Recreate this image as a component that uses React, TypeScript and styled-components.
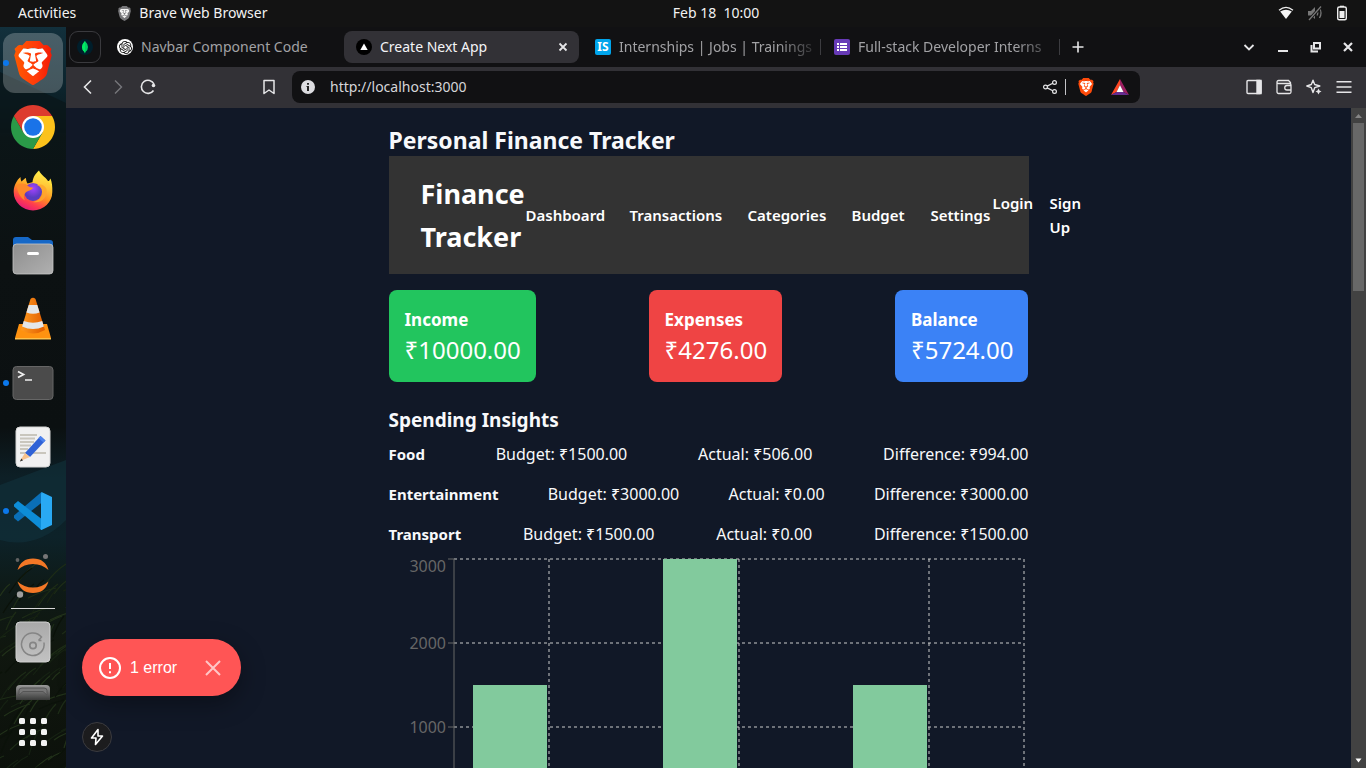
import React from "react";
import styled, { createGlobalStyle, css } from "styled-components";
import { SiBrave, SiOpenai } from "react-icons/si";

const uiFont = '"Noto Sans", "Open Sans", sans-serif';

const GlobalStyle = createGlobalStyle`
  *, *::before, *::after { box-sizing: border-box; }
  html, body, #root { height: 100%; margin: 0; }
  body { background: #121214; color: #f3f4f6; font: 14px/20px ${uiFont}; overflow: hidden; }
  h1, h2, h3, p, ul { margin: 0; padding: 0; }
  ul { list-style: none; }
  button { padding: 0; border: 0; background: none; color: inherit; font: inherit; cursor: pointer; }
  a { color: inherit; text-decoration: none; }
  svg { display: block; flex: none; }
`;

/* ---------- desktop shell ---------- */

const Desktop = styled.div`
  display: flex;
  flex-direction: column;
  height: 100vh;
`;

const TopBar = styled.header`
  display: grid;
  grid-template-columns: 1fr auto 1fr;
  align-items: center;
  flex: none;
  height: 27px;
  padding: 0 18px 1px;
  background: #131313;
  color: #f2f2f2;
`;

const TopGroup = styled.div<{ $end?: boolean; $gap: number }>`
  display: flex;
  align-items: center;
  justify-content: ${(p) => (p.$end ? "flex-end" : "flex-start")};
  gap: ${(p) => p.$gap}px;
`;

const AppMenu = styled.button`
  display: flex;
  align-items: center;
  gap: 7px;
`;

/* centred over the window area, to the right of the dock */
const Clock = styled.button`
  margin-left: 66px;
  white-space: pre;
`;

const Workspace = styled.div`
  display: flex;
  flex: 1;
  min-height: 0;
`;

/* ---------- dock ---------- */

const DockBar = styled.nav`
  position: relative;
  display: flex;
  flex-direction: column;
  flex: none;
  width: 66px;
  padding: 4px 0;
  overflow: hidden;
  background: linear-gradient(#12303c 0, #0c242d 60px, #0b1517 110px, #0c1112 240px, #0b1011 400px, #0d1f26 450px, #0d2229 510px, #0e1a17 560px, #10170f 620px, #0c110b 100%);
`;

const Wallpaper = styled.svg`
  position: absolute;
  inset: 0;
  width: 100%;
  height: 100%;
`;

const DockList = styled.div`
  position: relative;
  display: flex;
  flex-direction: column;
  flex: 1;
  min-height: 0;
  overflow: hidden;
`;

const DockItem = styled.button<{ $running?: boolean }>`
  position: relative;
  display: flex;
  align-items: center;
  justify-content: center;
  flex: none;
  width: 66px;
  height: 64px;
  ${(p) =>
    p.$running &&
    css`
      &::before {
        content: "";
        position: absolute;
        left: 3px;
        top: 29px;
        width: 6px;
        height: 6px;
        border-radius: 50%;
        background: #0b78ec;
      }
    `}
`;

const ActiveTile = styled.span`
  display: flex;
  align-items: center;
  justify-content: center;
  width: 60px;
  height: 60px;
  border-radius: 12px;
  background: rgba(255, 255, 255, 0.23);
`;

const DockDivider = styled.hr`
  flex: none;
  width: 44px;
  height: 1px;
  margin: 1px auto;
  border: 0;
  background: #d8d8d8;
`;

const LogoStack = styled.span`
  position: relative;
  display: block;
  & > svg + svg { position: absolute; inset: 0; }
`;

/* ---------- browser window ---------- */

const Window = styled.section`
  display: flex;
  flex-direction: column;
  flex: 1;
  min-width: 0;
`;

const TabStrip = styled.div`
  display: flex;
  align-items: center;
  flex: none;
  gap: 4px;
  height: 40px;
  padding: 0 3px;
  background: #111113;
`;

const PinnedTab = styled.button`
  display: flex;
  align-items: center;
  justify-content: center;
  flex: none;
  width: 32px;
  height: 32px;
  border: 1px solid #3a3a3e;
  border-radius: 9px;
`;

const Tab = styled.div<{ $active?: boolean; $divided?: boolean }>`
  position: relative;
  display: flex;
  align-items: center;
  flex: 0 1 235px;
  gap: 8px;
  min-width: 0;
  height: 32px;
  padding: 0 ${(p) => (p.$active ? 10 : 2)}px 0 12px;
  border-radius: 8px;
  background: ${(p) => (p.$active ? "#323136" : "transparent")};
  color: ${(p) => (p.$active ? "#f4f4f6" : "#a2a2a5")};
  ${(p) =>
    p.$divided &&
    css`
      &::after {
        content: "";
        position: absolute;
        right: -3px;
        top: 8px;
        width: 1px;
        height: 16px;
        background: #3c3c40;
      }
    `}
`;

const TabTitle = styled.button<{ $fade?: boolean }>`
  flex: 1;
  min-width: 0;
  overflow: hidden;
  text-align: left;
  white-space: nowrap;
  ${(p) => p.$fade && css`mask-image: linear-gradient(90deg, #000 80%, rgba(0, 0, 0, 0.15));`}
`;

const TabIcon = styled.span<{ $bg: string; $round?: boolean }>`
  display: flex;
  align-items: center;
  justify-content: center;
  flex: none;
  width: 16px;
  height: 16px;
  border-radius: ${(p) => (p.$round ? "50%" : "2px")};
  background: ${(p) => p.$bg};
  color: #fff;
  font: 700 12px/16px ${uiFont};
`;

const IconButton = styled.button<{ $w?: number }>`
  display: flex;
  align-items: center;
  justify-content: center;
  flex: none;
  width: ${(p) => p.$w ?? 30}px;
  height: 30px;
  color: #e6e6e8;
`;

const WindowControls = styled.div`
  display: flex;
  margin-left: auto;
`;

const Toolbar = styled.div`
  display: flex;
  align-items: center;
  flex: none;
  height: 41px;
  padding: 0 7px 1px;
  background: #323136;
`;

const Spacer = styled.div<{ $grow: number }>`
  flex: ${(p) => p.$grow} 1 0;
`;

const AddressBar = styled.form`
  display: flex;
  align-items: center;
  flex: 837 1 0;
  min-width: 0;
  height: 32px;
  margin-left: 8px;
  padding: 0 2px 0 9px;
  border-radius: 8px;
  background: #111113;
`;

const AddressInput = styled.input`
  flex: 1;
  min-width: 0;
  padding: 0 0 0 15px;
  border: 0;
  outline: 0;
  background: none;
  color: #d6d6d9;
  font: 14px/20px ${uiFont};
`;

const AddressRule = styled.span`
  width: 1px;
  height: 16px;
  margin-right: 4px;
  background: #c4c4c8;
`;

/* ---------- page ---------- */

const Viewport = styled.div`
  position: relative;
  display: flex;
  flex: 1;
  min-height: 0;
`;

const Page = styled.main`
  flex: 1;
  min-width: 0;
  overflow: hidden;
  background: #111827;
  color: #f8f9fb;
  font-size: 16px;
  line-height: 24px;
`;

const Container = styled.div`
  max-width: 640px;
  margin: 0 auto;
  padding-top: 16px;
`;

const PageTitle = styled.h1`
  font-size: 23px;
  font-weight: 700;
  line-height: 32px;
`;

const Navbar = styled.nav`
  display: flex;
  align-items: center;
  padding: 16px 32px;
  background: #333;
  color: #fff;
  font-size: 15px;
  font-weight: 600;
`;

const Brand = styled.a`
  flex: none;
  width: 105px;
  font-size: 27px;
  font-weight: 700;
  line-height: 43px;
`;

const NavLinks = styled.ul`
  display: grid;
  grid-template-columns: 80px 94px 80px 55px 62px;
  column-gap: 24px;
  flex: none;
`;

const AuthLinks = styled.div`
  display: grid;
  grid-template-columns: 41px 32px;
  column-gap: 16px;
  flex: none;
`;

const Cards = styled.section`
  display: flex;
  justify-content: space-between;
  margin-top: 16px;
`;

const Card = styled.article<{ $color: string }>`
  padding: 16px 15px 16px 16px;
  border-radius: 8px;
  background: ${(p) => p.$color};
  color: #fff;
`;

const CardTitle = styled.h2`
  font-size: 17px;
  font-weight: 700;
  line-height: 28px;
`;

const CardAmount = styled.p`
  font-size: 24px;
  line-height: 32px;
`;

const SectionTitle = styled.h2`
  margin-top: 24px;
  font-size: 19px;
  font-weight: 700;
  line-height: 28px;
`;

const InsightRow = styled.li`
  display: flex;
  justify-content: space-between;
  padding: 8px 0;
`;

const InsightName = styled.strong`
  font-size: 15px;
`;

const ChartText = styled.text`
  fill: #666;
  font: 16px ${uiFont};
  text-anchor: end;
`;

const ScrollTrack = styled.div`
  display: flex;
  flex-direction: column;
  align-items: center;
  flex: none;
  width: 15px;
  padding: 5px 0;
  background: #424242;
`;

const ScrollThumb = styled.div`
  width: 11px;
  height: 168px;
  margin: 4px 0 auto;
  background: #686868;
`;

const Toast = styled.div`
  position: absolute;
  left: 16px;
  bottom: 72px;
  display: flex;
  align-items: center;
  height: 57px;
  padding: 0 20px 0 16px;
  border-radius: 29px;
  background: #ff5555;
  color: #fff;
  box-shadow: 0 8px 24px rgba(0, 0, 0, 0.35);
  font: 16px/24px "Liberation Sans", Arial, sans-serif;
`;

const ToastLabel = styled.span`
  margin: 0 28px 0 8px;
`;

const DevButton = styled.button`
  position: absolute;
  left: 16px;
  bottom: 16px;
  display: flex;
  align-items: center;
  justify-content: center;
  width: 30px;
  height: 30px;
  border: 1px solid #3b3b3f;
  border-radius: 50%;
  background: #1c1c1e;
`;

/* ---------- drawings ---------- */

type StrokeProps = { size?: number; width?: number; box?: number; children: React.ReactNode };

const Line = ({ size = 16, width = 1.3, box = 16, children }: StrokeProps) => (
  <svg width={size} height={size} viewBox={`0 0 ${box} ${box}`} fill="none" stroke="currentColor" strokeWidth={width}>
    {children}
  </svg>
);

const BraveLogo = ({ size, fill, face = "#fff" }: { size: number; fill: string; face?: string }) => (
  <LogoStack>
    <svg width={size} height={size} viewBox="0 0 24 24">
      <path d="M6 4h12l2.500 3-1.500 9-7 6-7-6L3.500 7z" fill={face} />
    </svg>
    <SiBrave size={size} fill={fill} />
  </LogoStack>
);

const Gradients = () => (
  <svg width="0" height="0" style={{ position: "absolute" }} aria-hidden="true">
    <defs>
      <linearGradient id="brave"><stop stopColor="#ff5a00" /><stop offset=".6" stopColor="#ff3a0a" /><stop offset="1" stopColor="#f21a05" /></linearGradient>
    </defs>
  </svg>
);

const ChromeLogo = () => (
  <svg width="44" height="44" viewBox="0 0 44 44">
    <path d="M22 22 2.950 11A22 22 0 0 1 41.050 11z" fill="#dd3b2e" />
    <path d="M22 22V11h19.050A22 22 0 0 1 22 44l9.500-16.500z" fill="#fcc21b" />
    <path d="M22 22 31.500 27.500 22 44A22 22 0 0 1 2.950 11l9.550 16.500z" fill="#2a9a48" />
    <path d="M2.950 11 12.500 27.500 22 22 22 11z" fill="#dd3b2e" />
    <circle cx="22" cy="22" r="11" fill="#fff" />
    <circle cx="22" cy="22" r="8.800" fill="#1a73e8" />
  </svg>
);

const FirefoxLogo = () => (
  <svg width="42" height="42" viewBox="0 0 42 42">
    <defs>
      <linearGradient id="ffBody" x1=".8" y1=".1" x2=".3" y2="1"><stop stopColor="#ffe13c" /><stop offset=".45" stopColor="#ff9320" /><stop offset=".75" stopColor="#ff3d4e" /><stop offset="1" stopColor="#e3177e" /></linearGradient>
      <linearGradient id="ffFlame" x1=".6" y1="0" x2=".5" y2="1"><stop stopColor="#fff04a" /><stop offset=".6" stopColor="#ffbd34" /><stop offset="1" stopColor="#ff7a2a" /></linearGradient>
      <radialGradient id="ffGlobe" cx=".5" cy=".3"><stop stopColor="#a444ff" /><stop offset="1" stopColor="#5a3cc0" /></radialGradient>
    </defs>
    <path d="M1.700 21C2 15 5 10 8.500 7c0 2 .5 3.500 1 4.500C11 10 12.500 8.500 14 8c0 2 .5 4 1.500 5.500L21 12l16-1 1.500-2.500C40 12 40.500 17 40.300 22A19.300 18.500 0 0 1 1.700 22z" fill="url(#ffBody)" />
    <path d="M20.500 12C21 7 24 3 27 .5c2 5 8 7 10.500 13 2 7-1 14-6.500 18 2-6 0-12-5-15-2-1-4.500-2-5.500-4.500z" fill="url(#ffFlame)" />
    <circle cx="21" cy="22" r="9" fill="url(#ffGlobe)" />
    <path d="M5 15c4-2 8-2 11 1 1.500 1.500 3 1.500 5 1.500-.5 2.500-4 3-6 4-3 2-4 5-2 9-5-3-8-9-8-15.500z" fill="#ff8a2a" />
    <path d="M25 15.500c4 .5 6 4 5.500 8S26 31 21 32c9 1.500 15-5 13.500-13-2-4-6-5.500-9.500-3.500z" fill="#ffa62b" opacity=".85" />
  </svg>
);

const FilesLogo = () => (
  <svg width="42" height="40" viewBox="0 0 42 40">
    <defs>
      <linearGradient id="drawer" x2="1" y2="1"><stop stopColor="#8e8e8e" /><stop offset="1" stopColor="#b0b0b0" /></linearGradient>
    </defs>
    <path d="M1 14V5a3 3 0 0 1 3-3h12l4 3h18a3 3 0 0 1 3 3v8z" fill="#1668c7" />
    <rect x="1" y="9" width="40" height="30" rx="3.500" fill="url(#drawer)" stroke="#c6c6c6" strokeWidth=".8" />
    <rect x="15" y="17" width="12" height="3" rx="1.500" fill="#fff" />
  </svg>
);

const VlcLogo = () => (
  <svg width="40" height="44" viewBox="0 0 40 44">
    <defs>
      <linearGradient id="cone"><stop stopColor="#ff9a1f" /><stop offset="1" stopColor="#e05c00" /></linearGradient>
    </defs>
    <path d="M6 27h28l4 14H2z" fill="#ff9210" />
    <path d="M2 41h36v1.500H2z" fill="#ffc14a" />
    <path d="M8 33 17.500 2q2.500-2.500 5 0L32 33q-12 7-24 0z" fill="url(#cone)" />
    <path d="m15.700 8h8.600l2.300 7.500q-6.600 2.500-13.200 0zM10.800 24q9.200 3.500 18.400 0l1.700 5.500q-10.900 5-21.800 0z" fill="#e4e6e8" />
  </svg>
);

const TerminalLogo = () => (
  <svg width="42" height="36" viewBox="0 0 42 36">
    <rect x="1" y="1.500" width="40" height="33" rx="3.500" fill="#4b4b4b" stroke="#666" />
    <path d="m6 6.500 5.500 3-5.500 3" fill="none" stroke="#eee" strokeWidth="1.800" />
    <path d="M13 15h7" stroke="#eee" strokeWidth="1.500" />
  </svg>
);

const EditorLogo = () => (
  <svg width="36" height="42" viewBox="0 0 36 42">
    <rect x="1" y="1" width="34" height="40" rx="4" fill="#f1f1f1" stroke="#d5d5d5" />
    <path d="M5 9h17M5 12.500h15M5 16h14M5 19.500h11M5 23h8M5 27h26" stroke="#c9c6bd" strokeWidth="1.800" />
    <path d="m10 27 15.500-17 5 4.500L15 31z" fill="#2f62d6" />
    <path d="m25.500 10 5 4.500-2 2-5-4.500z" fill="#4d83ee" />
    <path d="M10 27 5 35l10-4z" fill="#f7c28c" />
    <path d="m6.500 32.500-1.700 3 3.200-1z" fill="#333" />
  </svg>
);

const CodeLogo = () => (
  <svg width="40" height="40" viewBox="0 0 40 40">
    <path d="M1 24.500 28.500 1l1 10L5 30.500l-4-3.500z" fill="#0a6fb7" />
    <path d="M1 13.500 5 10l25 19-1.500 10L1 15.500z" fill="#0d8dd8" />
    <path d="M28.500 1 39 6v28l-10.500 5q-1.500 0-.5-3V4q0-1.500.5-3z" fill="#29a9f3" />
  </svg>
);

const JupyterLogo = () => (
  <svg width="40" height="46" viewBox="0 0 40 46">
    <path d="M4.500 18Q8 6.500 20 6.500T35.500 18Q29 12 20 12T4.500 18zM4.500 29.500Q8 41 20 41t15.500-11.500Q29 35.500 20 35.500T4.500 29.500z" fill="#f37726" />
    <circle cx="32.500" cy="4.500" r="2.500" fill="#767677" />
    <circle cx="4.500" cy="8" r="1.900" fill="#616262" />
    <circle cx="7" cy="42.500" r="3.200" fill="#9e9e9e" />
  </svg>
);

const DiskLogo = () => (
  <svg width="36" height="42" viewBox="0 0 36 42">
    <defs>
      <linearGradient id="disk" x2="0" y2="1"><stop stopColor="#a9a9a9" /><stop offset="1" stopColor="#c2c2c2" /></linearGradient>
    </defs>
    <rect x="1" y="1" width="34" height="40" rx="4" fill="url(#disk)" stroke="#d0d0d0" />
    <path d="M23.500 19.500 26.500 16A11.300 11.300 0 1 0 29 21.500M26.500 16l-1-1M23.500 19.500h3" fill="none" stroke="#858585" strokeWidth="1.500" />
    <circle cx="18" cy="24.500" r="3.200" fill="none" stroke="#858585" strokeWidth="1.700" />
  </svg>
);

const UsbLogo = () => (
  <svg width="36" height="42" viewBox="0 0 36 42">
    <defs>
      <linearGradient id="usb" x2="0" y2="1"><stop stopColor="#9a9a9a" /><stop offset=".35" stopColor="#3c3d3c" /></linearGradient>
    </defs>
    <rect x="1" y="0" width="34" height="42" rx="4" fill="url(#usb)" />
    <path d="M4 10V5.500Q4 3 7 3h22q3 0 3 2.500V10l-4-3.500H8z" fill="#777" stroke="#555" />
  </svg>
);

const AppsLogo = () => (
  <svg width="28" height="28" viewBox="0 0 28 28" fill="#f2f2f2">
    {[0, 11, 22].map((y) => [0, 11, 22].map((x) => <rect key={`${x}-${y}`} x={x} y={y} width="6" height="6" rx="1.500" />))}
  </svg>
);

const blades = Array.from({ length: 90 }, (_, i) => {
  const x = ((i * 37) % 82) - 12;
  const y = 555 + ((i * 53) % 200);
  const dx = 8 + ((i * 29) % 22);
  const dy = 6 + ((i * 17) % 20);
  return { d: `M${x} ${y}q${dx / 2} ${-dy * 0.7} ${dx} ${-dy}`, color: ["#1d2c17", "#162213", "#22321a", "#0b120a"][i % 4] };
});

const GrassWallpaper = () => (
  <Wallpaper aria-hidden="true">
    <path d="M0 45 66 76v30H0z" fill="#0a1518" opacity=".7" />
    <path d="M0 458 66 433v60q-30 30-66 20z" fill="#12333e" opacity=".55" />
    {blades.map((b, i) => (
      <path key={i} d={b.d} stroke={b.color} strokeWidth="1.200" fill="none" />
    ))}
  </Wallpaper>
);

/* ---------- sections ---------- */

const dockApps = [
  { name: "Google Chrome", icon: <ChromeLogo /> },
  { name: "Firefox", icon: <FirefoxLogo /> },
  { name: "Files", icon: <FilesLogo /> },
  { name: "VLC media player", icon: <VlcLogo /> },
  { name: "Terminal", icon: <TerminalLogo />, running: true },
  { name: "Text Editor", icon: <EditorLogo /> },
  { name: "Visual Studio Code", icon: <CodeLogo />, running: true },
  { name: "Jupyter", icon: <JupyterLogo /> },
];

const Dock = () => (
  <DockBar aria-label="Dock">
    <GrassWallpaper />
    <DockList>
      <DockItem $running aria-label="Brave">
        <ActiveTile><BraveLogo size={44} fill="url(#brave)" /></ActiveTile>
      </DockItem>
      {dockApps.map((app) => (
        <DockItem key={app.name} $running={app.running} aria-label={app.name}>{app.icon}</DockItem>
      ))}
      <DockDivider />
      <DockItem aria-label="Disk"><DiskLogo /></DockItem>
      <DockItem aria-label="Removable drive"><UsbLogo /></DockItem>
    </DockList>
    <DockItem aria-label="Show applications"><AppsLogo /></DockItem>
  </DockBar>
);

const SystemBar = () => (
  <TopBar>
    <TopGroup $gap={41}>
      <button>Activities</button>
      <AppMenu><BraveLogo size={15} fill="#77777a" face="#f5f5f5" />Brave Web Browser</AppMenu>
    </TopGroup>
    <Clock>{"Feb 18  10:00"}</Clock>
    <TopGroup $gap={13} $end>
      <svg width="16" height="14" viewBox="0 0 16 14">
        <path d="M1 4.200Q8-1.500 15 4.200" fill="none" stroke="#eee" strokeWidth="1.300" />
        <path d="M2.200 5.600Q8 1.800 13.800 5.600L8 13z" fill="#f5f5f5" />
      </svg>
      <svg width="16" height="16" viewBox="0 0 16 16" fill="none" stroke="#777" strokeWidth="1.300">
        <path d="M1 6h3l4-4v12L4 10.500H1z" fill="#777" stroke="none" />
        <path d="M10 5.500q1.500 2.500 0 5M12.500 3q3 5 0 10" />
        <path d="M2 15 14 1.500" stroke="#131313" strokeWidth="3" />
        <path d="M2 15 14 1.500" />
      </svg>
      <svg width="12" height="16" viewBox="0 0 12 16">
        <path d="M4 2V.7h4V2" fill="#eee" />
        <rect x="1.700" y="2" width="8.600" height="12.700" rx="1.500" fill="none" stroke="#eee" strokeWidth="1.400" />
        <path d="M3.500 6h5v7h-5z" fill="#eee" />
      </svg>
    </TopGroup>
  </TopBar>
);

const Tabs = () => (
  <TabStrip>
    <PinnedTab aria-label="MongoDB">
      <svg width="16" height="16" viewBox="0 0 16 16">
        <circle cx="8" cy="8" r="8" fill="#001e2b" />
        <path d="M8 2q3 3 3 6t-2.500 5L8 14.500 7.500 13Q5 11 5 8t3-6z" fill="#00d163" />
        <path d="M8 2v12.500L7.500 13Q5 11 5 8t3-6z" fill="#00ed64" />
      </svg>
    </PinnedTab>
    <Tab>
      <TabIcon $bg="#fff" $round><SiOpenai size={13} color="#111" /></TabIcon>
      <TabTitle>Navbar Component Code</TabTitle>
    </Tab>
    <Tab $active>
      <TabIcon $bg="#000" $round>
        <svg width="8" height="8" viewBox="0 0 8 8"><path d="M4 .5 7.700 7H.3z" fill="#fff" /></svg>
      </TabIcon>
      <TabTitle>Create Next App</TabTitle>
      <IconButton $w={12} aria-label="Close tab"><Line size={12} width={1.8} box={12}><path d="m2.500 2.500 7 7m0-7-7 7" /></Line></IconButton>
    </Tab>
    <Tab $divided>
      <TabIcon $bg="#00a5ec">IS</TabIcon>
      <TabTitle $fade>Internships | Jobs | Trainings</TabTitle>
    </Tab>
    <Tab $divided>
      <TabIcon $bg="#673ab7">
        <svg width="10" height="8" viewBox="0 0 10 8" fill="#fff"><path d="M0 0h2v2H0zM3 0h7v2H3zM0 3h2v2H0zM3 3h7v2H3zM0 6h2v2H0zM3 6h7v2H3z" /></svg>
      </TabIcon>
      <TabTitle $fade>Full-stack Developer Interns</TabTitle>
    </Tab>
    <IconButton aria-label="New tab" $w={34}><Line size={12} width={1.6} box={12}><path d="M6 .5v11M.5 6h11" /></Line></IconButton>
    <WindowControls>
      <IconButton $w={34} aria-label="Search tabs"><Line width={1.8}><path d="m3.500 6 4.500 4.500L12.500 6" /></Line></IconButton>
      <IconButton $w={33} aria-label="Minimize"><Line width={2}><path d="M3 12h10" /></Line></IconButton>
      <IconButton $w={33} aria-label="Restore"><Line width={2}><path d="M6 4h6v5.500H6zM3.500 6v6.500H10" /></Line></IconButton>
      <IconButton $w={31} aria-label="Close"><Line width={2.2}><path d="m4 4 8 8m0-8-8 8" /></Line></IconButton>
    </WindowControls>
  </TabStrip>
);

const BrowserBar = () => (
  <Toolbar>
    <IconButton aria-label="Back"><Line width={1.6}><path d="M11 1.500 4.500 8l6.500 6.500" /></Line></IconButton>
    <IconButton aria-label="Forward"><Line width={1.4}><path d="M5 1.500 11.500 8 5 14.500" stroke="#77777c" /></Line></IconButton>
    <IconButton aria-label="Reload">
      <Line width={1.6}>
        <path d="M13.500 11.500A6.600 6.600 0 1 1 14 5" />
        <circle cx="13.500" cy="6.500" r="1.800" fill="currentColor" stroke="none" />
      </Line>
    </IconButton>
    <Spacer $grow={91} />
    <IconButton aria-label="Bookmark"><Line width={1.5}><path d="M3 1.500h10v13L8 11l-5 3.500z" strokeLinejoin="round" /></Line></IconButton>
    <AddressBar>
      <svg width="14" height="14" viewBox="0 0 14 14">
        <circle cx="7" cy="7" r="7" fill="#dcdce0" />
        <path d="M6 3h2v1.800H6zM5.500 6H8v5H6V7h-.5z" fill="#222" />
      </svg>
      <AddressInput aria-label="Address" defaultValue="http://localhost:3000" />
      <IconButton type="button" aria-label="Share">
        <Line width={1.2}>
          <circle cx="3.500" cy="8" r="1.900" /><circle cx="12.500" cy="3.500" r="1.900" /><circle cx="12.500" cy="12.500" r="1.900" />
          <path d="m5.200 7.100 5.600-2.800m-5.600 4.600 5.600 2.800" />
        </Line>
      </IconButton>
      <AddressRule />
      <IconButton type="button" $w={32} aria-label="Shields"><BraveLogo size={18} fill="#ff4b0a" /></IconButton>
      <IconButton type="button" $w={36} aria-label="Rewards">
        <svg width="18" height="16" viewBox="0 0 18 16">
          <path d="M9 0 0 16l5.500-3L9 6z" fill="#ff4724" />
          <path d="M9 0v6l3.500 7L18 16z" fill="#9e1f63" />
          <path d="m0 16 5.500-3h7l5.500 3z" fill="#662d91" />
          <path d="m9 6 3.500 7h-7z" fill="#fff" />
        </svg>
      </IconButton>
    </AddressBar>
    <Spacer $grow={99} />
    <IconButton aria-label="Sidebar"><Line width={1.4}><rect x="1" y="1.500" width="14" height="13" rx="1" /><path d="M11 1.500h4v13h-4z" fill="currentColor" /></Line></IconButton>
    <IconButton aria-label="Wallet"><Line width={1.3}><path d="M14.500 5V3.500L12.500 1.500h-10a1.500 1.500 0 0 0 0 3h11a1.500 1.500 0 0 1 1.500 1.500v7a1.500 1.500 0 0 1-1.500 1.500h-11A1.500 1.500 0 0 1 1 13V3M15 6.500h-4a2 2 0 0 0 0 4.500h4" /></Line></IconButton>
    <IconButton aria-label="Assistant">
      <Line width={1.4}>
        <path d="M7 1.200 8.700 5.500 13.800 7 8.700 8.700 7 13.500 5.300 8.700.8 7 5.300 5.500z" strokeLinejoin="round" />
        <path d="M12.500 9.500l1 2 2 1-2 1-1 2-1-2-2-1 2-1z" fill="currentColor" stroke="none" />
      </Line>
    </IconButton>
    <IconButton aria-label="Menu"><Line width={1.5}><path d="M.5 2.700h15M.5 8h15M.5 13.300h15" /></Line></IconButton>
  </Toolbar>
);

const summary = [
  { title: "Income", amount: "₹10000.00", color: "#22c55e" },
  { title: "Expenses", amount: "₹4276.00", color: "#ef4444" },
  { title: "Balance", amount: "₹5724.00", color: "#3b82f6" },
];

const insights = [
  { name: "Food", budget: 1500, actual: 506 },
  { name: "Entertainment", budget: 3000, actual: 0 },
  { name: "Transport", budget: 1500, actual: 0 },
];

const money = (n: number) => `₹${n.toFixed(2)}`;

const BudgetChart = () => {
  const bottom = 257;
  const y = (value: number) => bottom - (value * 252) / 3000;
  return (
    <svg width="640" height="300" viewBox="0 0 640 300" role="img" aria-label="Budget by category">
      <g stroke="#ccc" strokeDasharray="3 3">
        {[1000, 2000, 3000].map((v) => <path key={v} d={`M65 ${y(v)}H635`} />)}
        {[160, 350, 540, 635].map((x) => <path key={x} d={`M${x} 5V${bottom}`} />)}
      </g>
      <path d={`M65 5V${bottom}H635M59 5h6M59 89h6M59 173h6`} stroke="#666" fill="none" />
      <ChartText x="57" y="18">3000</ChartText>
      <ChartText x="57" y="95">2000</ChartText>
      <ChartText x="57" y="179">1000</ChartText>
      {insights.map((row, i) => (
        <rect key={row.name} x={84 + i * 190} y={y(row.budget)} width="74" height={bottom - y(row.budget)} fill="#82ca9d" />
      ))}
    </svg>
  );
};

const FinancePage = () => (
  <Page>
    <Container>
      <PageTitle>Personal Finance Tracker</PageTitle>
      <Navbar>
        <Brand href="#">Finance Tracker</Brand>
        <NavLinks>
          {["Dashboard", "Transactions", "Categories", "Budget", "Settings"].map((label) => (
            <li key={label}><a href="#">{label}</a></li>
          ))}
        </NavLinks>
        <AuthLinks>
          <a href="#">Login</a>
          <a href="#">Sign Up</a>
        </AuthLinks>
      </Navbar>
      <Cards>
        {summary.map((card) => (
          <Card key={card.title} $color={card.color}>
            <CardTitle>{card.title}</CardTitle>
            <CardAmount>{card.amount}</CardAmount>
          </Card>
        ))}
      </Cards>
      <SectionTitle>Spending Insights</SectionTitle>
      <ul>
        {insights.map((row) => (
          <InsightRow key={row.name}>
            <InsightName>{row.name}</InsightName>
            <span>Budget: {money(row.budget)}</span>
            <span>Actual: {money(row.actual)}</span>
            <span>Difference: {money(row.budget - row.actual)}</span>
          </InsightRow>
        ))}
      </ul>
      <BudgetChart />
    </Container>
  </Page>
);

const App = () => (
  <>
    <GlobalStyle />
    <Gradients />
    <Desktop>
      <SystemBar />
      <Workspace>
        <Dock />
        <Window>
          <Tabs />
          <BrowserBar />
          <Viewport>
            <FinancePage />
            <ScrollTrack>
              <svg width="7" height="6" viewBox="0 0 7 6"><path d="M3.500 1 7 5H0z" fill="#858585" /></svg>
              <ScrollThumb />
              <svg width="7" height="5" viewBox="0 0 7 5"><path d="M.5.500h6l-3 4z" fill="#fff" /></svg>
            </ScrollTrack>
            <Toast role="status">
              <Line size={24} width={2} box={24}>
                <circle cx="12" cy="12" r="10" />
                <path d="M12 7v6M12 15.300v2" />
              </Line>
              <ToastLabel>1 error</ToastLabel>
              <button aria-label="Dismiss">
                <Line width={2}><path d="m1 1 14 14M15 1 1 15" stroke="#ffc6c6" /></Line>
              </button>
            </Toast>
            <DevButton aria-label="Developer tools">
              <Line size={18} width={1.6} box={18}><path d="M10 1.500 3.500 10H8l-.5 6.500L14.500 8H10z" stroke="#fff" strokeLinejoin="round" /></Line>
            </DevButton>
          </Viewport>
        </Window>
      </Workspace>
    </Desktop>
  </>
);

export default App;
